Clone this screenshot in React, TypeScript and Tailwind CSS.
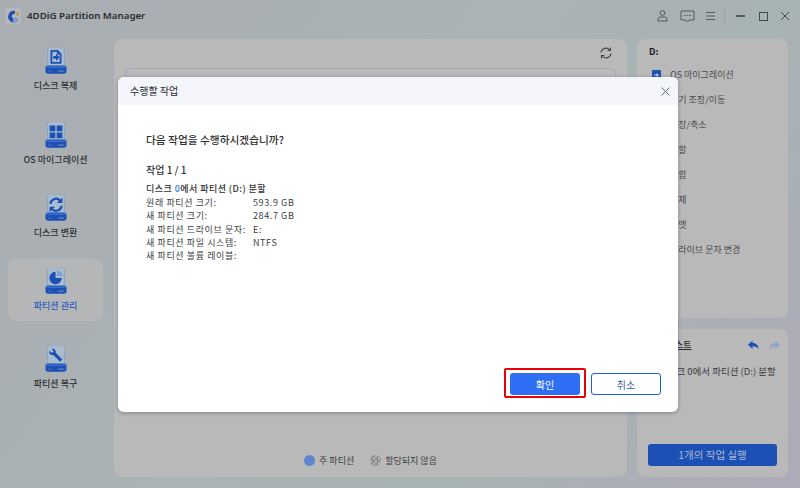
import type { ReactNode } from 'react';

const font = { fontFamily: '"Noto Sans CJK KR", "Liberation Sans", sans-serif' };

function DiskIcon({ children }: { children: ReactNode }) {
  return (
    <svg width="22" height="28" viewBox="0 0 24 30">
      <path d="M2 2.500a2 2 0 0 1 2-2h16a2 2 0 0 1 2 2V22H2z" fill="#8fa8c2" />
      <path d="M3.500 1h17v21h-17z" fill="#a9bdd0" />
      <path d="M0.500 23a3 3 0 0 1 3-3h17a3 3 0 0 1 3 3v3a3 3 0 0 1-3 3h-17a3 3 0 0 1-3-3z" fill="#1c50b4" />
      <path d="M1 22.500a3 3 0 0 1 2.500-1.500h17a3 3 0 0 1 2.500 1.500z" fill="#3a6fd0" />
      <path d="M4 26h2M14 26h7" stroke="#8296b8" strokeWidth="1" />
      {children}
    </svg>
  );
}

const navItems: { label: string; active?: boolean; top: string; icon: ReactNode }[] = [
  {
    label: '디스크 복제',
    top: 'mt-0',
    icon: (
      <>
        <path d="M6 3h8l4 4v11H6z" fill="#1c50b4" />
        <path d="M8 5h5v3h3v8H8z" fill="#a9bdd0" />
        <path d="M9 9.500h3V7l4 4-4 4v-2.500H9z" fill="#1c50b4" />
      </>
    ),
  },
  {
    label: 'OS 마이그레이션',
    top: 'mt-[12px]',
    icon: <path d="M5 4.500h6.300v6.300H5zM12.700 4.500H19v6.300h-6.300zM5 12.200h6.300v6.300H5zM12.700 12.200H19v6.300h-6.300z" fill="#1c50b4" />,
  },
  {
    label: '디스크 변환',
    top: 'mt-[11px]',
    icon: (
      <>
        <path d="M6 10.500a6 6 0 0 1 10.500-3.500" fill="none" stroke="#1c50b4" strokeWidth="2.400" />
        <path d="M18 12.500a6 6 0 0 1-10.500 3.500" fill="none" stroke="#1c50b4" strokeWidth="2.400" />
        <path d="M19 3.500v6h-6zM5 19.500v-6h6z" fill="#1c50b4" />
      </>
    ),
  },
  {
    label: '파티션 관리',
    active: true,
    top: 'mt-[11px]',
    icon: (
      <>
        <path d="M11.500 5a6.800 6.800 0 1 0 6.800 6.800h-6.800z" fill="#1c50b4" />
        <path d="M13 3.500a6 6 0 0 1 6 6h-6z" fill="#7f9fd6" />
      </>
    ),
  },
  {
    label: '파티션 복구',
    top: 'mt-[16px]',
    icon: (
      <path
        d="M5 6l2.500 2.500 2-2L7 4c2.500-1 5.500 1 4.500 4l7.500 7.500-2.500 2.500L9 10.500C6 11.500 4 8.500 5 6z"
        fill="#1c50b4"
      />
    ),
  },
];

function Sidebar() {
  return (
    <nav className="w-[114px] shrink-0 pl-2 flex flex-col">
      {navItems.map((item) => (
        <div
          key={item.label}
          className={`w-[95px] h-[62px] rounded-lg flex flex-col items-center pt-[8px] ${item.top} ${
            item.active ? 'bg-[#b4b6b8]' : ''
          }`}
        >
          <DiskIcon>{item.icon}</DiskIcon>
          <span
            className={`text-[9px] leading-[14px] mt-[4px] font-medium whitespace-nowrap ${
              item.active ? 'text-[#2c5cb8]' : 'text-[#2e2f30]'
            }`}
          >
            {item.label}
          </span>
        </div>
      ))}
    </nav>
  );
}

function TitleBar() {
  return (
    <header className="h-[39px] flex items-start pt-[8px] pl-[5px] pr-[11px] shrink-0">
      <div className="w-[16px] h-[16px] rounded-[4px] bg-[#b5b7ba] flex items-center justify-center">
        <svg width="13" height="13" viewBox="0 0 13 13">
          <path d="M8 1a5.700 5.700 0 1 0 3.500 9L9 8a2.400 2.400 0 1 1-1-4z" fill="#1c50b4" />
          <path d="M6 12.300a5.700 5.700 0 0 0 5.500-2.300L9 8a2.400 2.400 0 0 1-3 .8z" fill="#7f9fd6" />
          <path d="M9 2l3.500 2-2.500 2.500z" fill="#b99a2c" />
        </svg>
      </div>
      <span
        className="ml-[6px] text-[9.700px] leading-[16px] font-semibold text-[#2a2b2c]"
        style={{ fontFamily: '"Noto Sans", sans-serif' }}
      >
        4DDiG Partition Manager
      </span>
      <div className="ml-auto flex items-center h-[16px] text-[#55585e]">
        <svg width="11" height="12" viewBox="0 0 11 12" fill="none" stroke="currentColor" strokeWidth="1">
          <circle cx="5.500" cy="3" r="2.300" />
          <path d="M1 11v-1.500a2.500 2.500 0 0 1 2.500-2.500h4a2.500 2.500 0 0 1 2.500 2.500V11z" />
        </svg>
        <svg className="ml-[12px]" width="15" height="13" viewBox="0 0 15 13" fill="none" stroke="currentColor" strokeWidth="1">
          <path d="M1 1h13v9H9l-1.500 2L6 10H1z" />
          <path d="M4 5.500h1.500M6.800 5.500h1.500M9.500 5.500h1.500" />
        </svg>
        <svg className="ml-[11px]" width="9" height="10" viewBox="0 0 9 10" stroke="currentColor" strokeWidth="1">
          <path d="M0 1.500h9M0 5h9M0 8.500h9" />
        </svg>
        <div className="ml-[9px] w-px h-[16px] bg-[#a0a4a8]" />
        <div className="ml-[11px] w-[9px] h-[1.500px] bg-[#55585e]" />
        <div className="ml-[14px] w-[9px] h-[9px] border border-[#44474c]" />
        <svg className="ml-[13px]" width="8" height="8" viewBox="0 0 8 8" stroke="#44474c" strokeWidth="1">
          <path d="M0 0l8 8M8 0L0 8" />
        </svg>
      </div>
    </header>
  );
}

function RightPanels() {
  const ops = ['OS 마이그레이션', '크기 조정/이동', '확장/축소', '분할', '병합', '삭제', '포맷', '드라이브 문자 변경'];
  return (
    <aside className="w-[151px] shrink-0 ml-[10px] flex flex-col gap-[11px]">
      <div className="h-[279px] rounded-lg bg-[#b9b9b9] pl-[12px] pt-[6px]">
        <div className="text-[9px] leading-[14px] font-bold text-[#17181a]">D:</div>
        <ul className="mt-[3px]">
          {ops.map((op) => (
            <li key={op} className="h-[25px] flex items-center text-[9px] text-[#4a4b4d]">
              <span className="w-[9px] h-[10px] mr-[9px] ml-[3px] rounded-[1px] bg-[#1c50b4] shrink-0 flex items-center justify-center">
                <svg width="5" height="4" viewBox="0 0 5 4" fill="#c9d6ee">
                  <path d="M0 1.500h2.500V0L5 2 2.500 4V2.500H0z" />
                </svg>
              </span>
              {op}
            </li>
          ))}
        </ul>
      </div>
      <div className="flex-1 rounded-lg bg-[#b9b9b9] pl-[11px] pr-[11px] pt-[9px] flex flex-col">
        <div className="flex items-center justify-between">
          <span className="text-[9px] font-medium text-[#2a2b2c] underline">작업 리스트</span>
          <span className="flex gap-[10px] text-[#1c50b4] -mr-[3px]">
            <svg width="11" height="10" viewBox="0 0 11 10" fill="currentColor">
              <path d="M4.500 0.500v2.500c3.500 0 6 2 6 6.500-1-2.500-3-3.200-6-3.200V9L0 4.700z" />
            </svg>
            <svg width="11" height="10" viewBox="0 0 11 10" fill="#8fa4c8">
              <path d="M6.500 0.500v2.500c-3.500 0-6 2-6 6.500 1-2.500 3-3.200 6-3.200V9L11 4.700z" />
            </svg>
          </span>
        </div>
        <div className="mt-[12px] ml-[11px] text-[9.500px] text-[#3c3d3f] whitespace-nowrap">디스크 0에서 파티션 (D:) 분할</div>
        <button className="mt-auto mb-[11px] h-[22px] rounded-[3px] bg-[#1c50b4] text-[10.500px] text-[#a9b9d6]">
          1개의 작업 실행
        </button>
      </div>
    </aside>
  );
}

function MainPanel() {
  return (
    <main className="w-[513px] shrink-0 rounded-lg bg-[#b9b9b9] flex flex-col">
      <div className="flex justify-end pt-[7px] pr-[14px]">
        <svg width="14" height="14" viewBox="0 0 14 14" fill="none" stroke="#44474c" strokeWidth="1.100">
          <path d="M2 6.500a5 5 0 0 1 8.800-2.500M12 7.500a5 5 0 0 1-8.800 2.500" />
          <path d="M11.500 1.500V4.500H8.500M2.500 12.500V9.500H5.500" />
        </svg>
      </div>
      <div className="mx-[11px] mt-[8px] h-[20px] rounded-t-[6px] border border-b-0 border-[#a3a8b8]" />
      <div className="mt-auto mb-[10px] flex items-center justify-center gap-[16px] text-[9px] text-[#3c3d3f]">
        <span className="flex items-center gap-[4px]">
          <span className="w-[11px] h-[11px] rounded-full bg-[#5e86cf]" />주 파티션
        </span>
        <span className="flex items-center gap-[4px]">
          <span className="w-[11px] h-[11px] rounded-full bg-[repeating-conic-gradient(#8a8a8a_0_25%,#b0b0b0_0_50%)] bg-[length:5px_5px]" />
          할당되지 않음
        </span>
      </div>
    </main>
  );
}

function Modal() {
  const rows = [
    ['원래 파티션 크기:', '593.9 GB'],
    ['새 파티션 크기:', '284.7 GB'],
    ['새 파티션 드라이브 문자:', 'E:'],
    ['새 파티션 파일 시스템:', 'NTFS'],
    ['새 파티션 볼륨 레이블:', ''],
  ];
  return (
    <div className="absolute left-[118px] top-[77px] w-[560px] h-[335px] rounded-md bg-white flex flex-col overflow-hidden shadow-[0_1px_4px_rgba(60,60,80,0.4)]">
      <div className="h-[28px] shrink-0 bg-[#f3f5fb] flex items-center justify-between pl-[12px] pr-[8px] pb-[2px]">
        <span className="text-[10px] text-[#2a2b2c]">수행할 작업</span>
        <svg width="9" height="9" viewBox="0 0 9 9" stroke="#5a6a90" strokeWidth="1" className="mt-[2px]">
          <path d="M0.500 0.500l8 8M8.500 0.500l-8 8" />
        </svg>
      </div>
      <div className="pl-[28px] pt-[28px] flex-1 text-[#2e2f30]">
        <p className="text-[10.700px] leading-[14px] font-medium">다음 작업을 수행하시겠습니까?</p>
        <p className="mt-[16px] text-[10px] leading-[14px] font-medium">작업 1 / 1</p>
        <p className="mt-[5px] text-[9px] leading-[14px] font-medium tracking-[0.45px]">
          디스크 <span className="text-[#2f7bf0]">0</span>에서 파티션 (D:) 분할
        </p>
        <div className="grid grid-cols-[107px_1fr] text-[9px] leading-[13.300px] tracking-[0.6px] text-[#3c3d3f]">
          {rows.map(([k, v]) => (
            <div key={k} className="contents">
              <span className="whitespace-nowrap">{k}</span>
              <span>{v}</span>
            </div>
          ))}
        </div>
      </div>
      <div className="flex items-center justify-end gap-[11px] pr-[17px] pb-[17px]">
        <span className="relative flex">
          <button className="w-[70px] h-[22px] rounded-[3px] bg-[#2f6ff5] text-[10px] text-white">확인</button>
          <span className="absolute -left-[6px] -right-[6px] -top-[5px] -bottom-[3px] border-2 border-[#e8000b] rounded-[2px]" />
        </span>
        <button className="w-[70px] h-[22px] rounded-[3px] border border-[#1d5ce0] bg-white text-[10px] text-[#3a5ea8]">
          취소
        </button>
      </div>
    </div>
  );
}

export default function App() {
  return (
    <div
      className="relative w-[800px] h-[488px] overflow-hidden flex flex-col bg-[linear-gradient(125deg,#a9adb2_0%,#aab3b5_45%,#a8b3b3_70%,#aeaab8_100%)]"
      style={font}
    >
      <TitleBar />
      <div className="flex-1 flex pr-[12px] pb-[11px]">
        <Sidebar />
        <MainPanel />
        <RightPanels />
      </div>
      <Modal />
    </div>
  );
}
